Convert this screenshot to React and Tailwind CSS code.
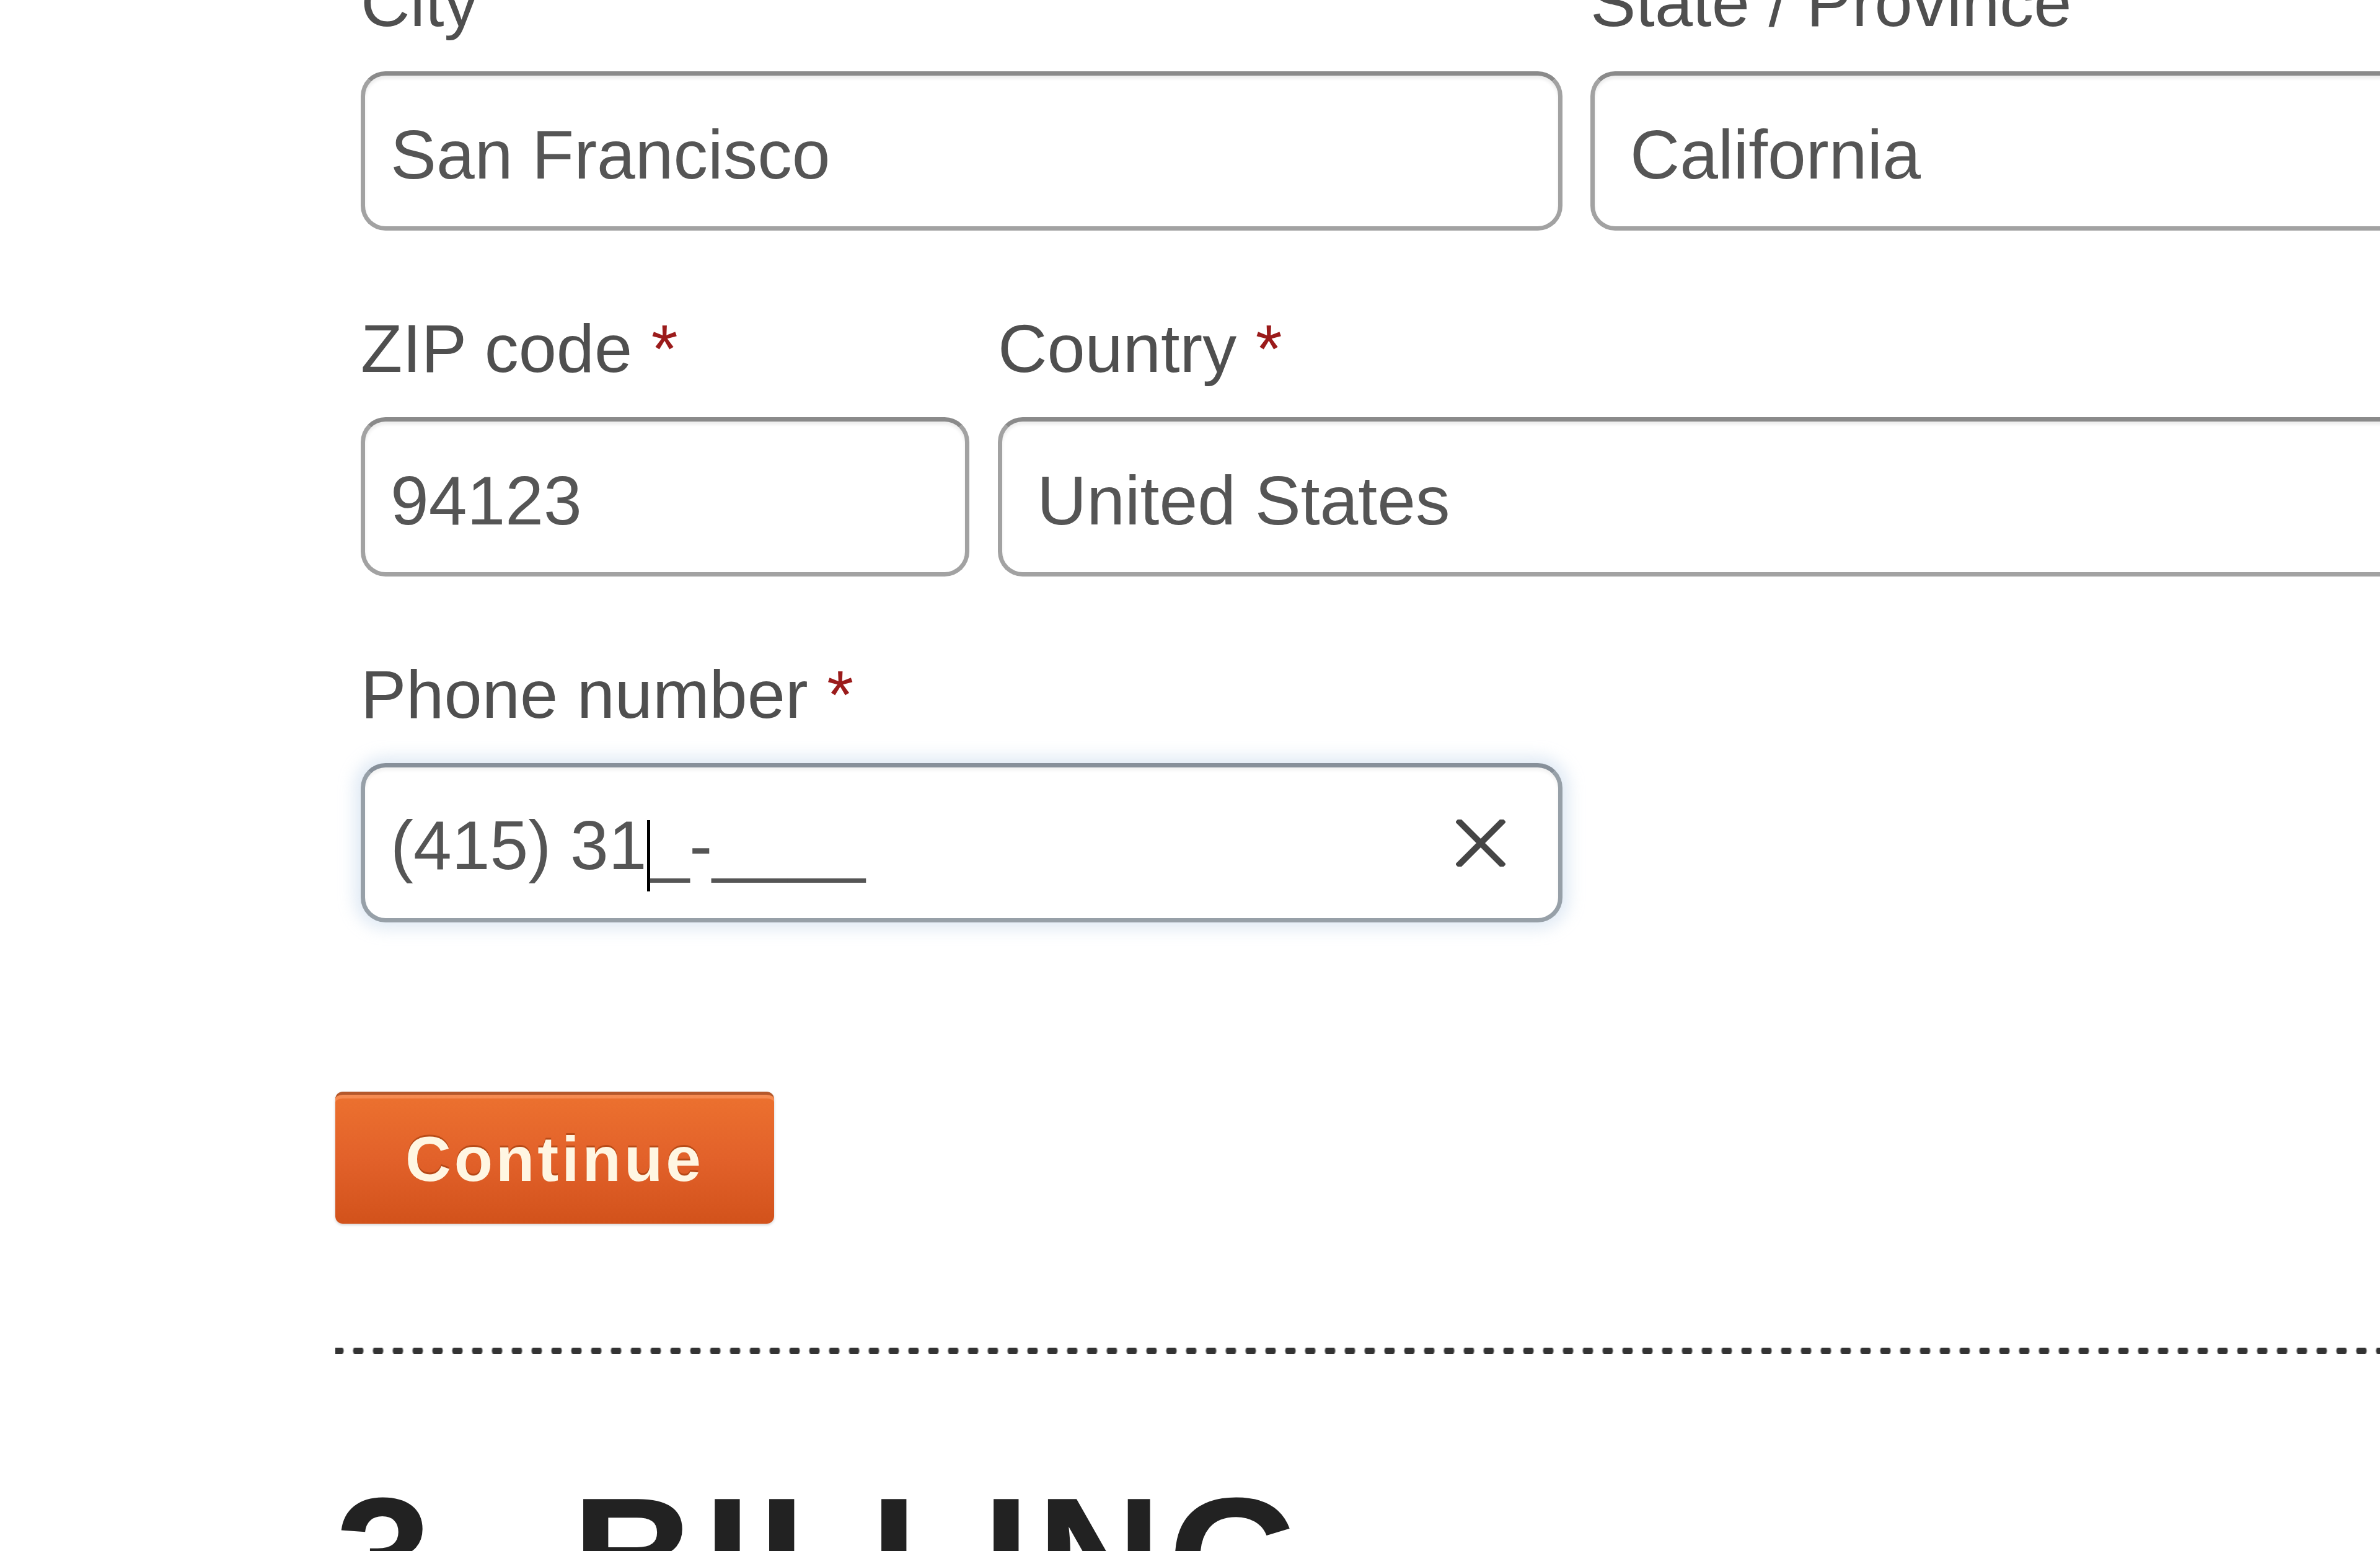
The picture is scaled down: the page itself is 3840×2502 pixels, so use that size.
import React from "react";

function Label({ children, required }) {
  return (
    <div className="h-[154px] text-[110px] leading-[154px] text-[#4f4f4f] whitespace-nowrap">
      {children}
      {required && <span className="text-[#9b1b1b]"> *</span>}
    </div>
  );
}

function Box({ className = "", children }) {
  return (
    <div
      className={
        "mt-[34px] h-[257px] flex items-center pt-[14px] rounded-[40px] border-[7px] border-[#a2a2a2] border-t-[#8a8a8a] bg-white text-[111px] leading-none text-[#555] whitespace-nowrap shadow-[inset_0_5px_5px_rgba(0,0,0,0.07)] " +
        className
      }
    >
      {children}
    </div>
  );
}

export default function App() {
  return (
    <div className="w-[3840px] h-[2502px] overflow-hidden bg-white font-['Liberation_Sans',Arial,sans-serif]">
      <div className="-mt-[73px] pl-[541px]">
        <div className="pl-[41px]">
          {/* Row 1 */}
          <div className="flex gap-[45px]">
            <div className="w-[1939px] shrink-0">
              <Label>City</Label>
              <Box className="pl-[41px]">San Francisco</Box>
            </div>
            <div className="w-[1939px] shrink-0">
              <Label>State / Province</Label>
              <Box className="pl-[57px]">California</Box>
            </div>
          </div>

          {/* Row 2 */}
          <div className="mt-[113px] flex gap-[46px]">
            <div className="w-[982px] shrink-0">
              <Label required>ZIP code</Label>
              <Box className="pl-[41px]">94123</Box>
            </div>
            <div className="w-[2895px] shrink-0">
              <Label required>Country</Label>
              <Box className="pl-[56px]">United States</Box>
            </div>
          </div>

          {/* Row 3 */}
          <div className="mt-[113px] w-[1939px]">
            <Label required>Phone number</Label>
            <div className="mt-[34px] h-[257px] flex items-center justify-between pt-[10px] pl-[41px] pr-[85px] rounded-[40px] border-[7px] border-[#97a0a8] border-t-[#87909a] bg-white text-[111px] leading-none text-[#555] whitespace-nowrap shadow-[0_0_26px_10px_rgba(175,200,228,0.4),inset_0_5px_5px_rgba(0,0,0,0.05)]">
              <div className="flex items-end">
                <span>(415) 31</span>
                <span className="w-[5px] h-[115px] bg-black mb-[-18px] mx-[1px]"></span>
                <span>_-____</span>
              </div>
              <svg width="80" height="76" viewBox="0 0 80 76" className="shrink-0 -mt-[10px]">
                <path d="M6 4 L74 72 M74 4 L6 72" stroke="#454545" strokeWidth="10" strokeLinecap="square" fill="none" />
              </svg>
            </div>
          </div>
        </div>

        {/* Continue button */}
        <div className="mt-[273px]">
          <button className="w-[708px] h-[213px] rounded-xl border-t-[5px] border-[#b5582b] bg-[linear-gradient(to_bottom,#ec712f,#e2612a_50%,#d2521b)] shadow-[inset_0_6px_0_rgba(255,160,110,0.55),0_2px_4px_rgba(0,0,0,0.18)] text-[102px] font-bold tracking-[5px] text-[#fff6e2] leading-none [text-shadow:0_-3px_0_rgba(130,45,0,0.45)]">
            Continue
          </button>
        </div>

        {/* Dotted separator */}
        <div className="mt-[200px] h-[10px] bg-[radial-gradient(circle,#333333_42%,transparent_58%)] bg-[length:32px_10px] bg-[position:-11px_0] bg-repeat-x"></div>

        {/* Heading */}
        <h2 className="mt-[190px] text-[280px] leading-none font-bold tracking-[10px] [word-spacing:40px] text-[#222] whitespace-nowrap">
          3. BILLING
        </h2>
      </div>
    </div>
  );
}
